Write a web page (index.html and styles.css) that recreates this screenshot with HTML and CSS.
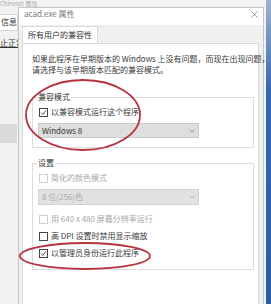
FILE: index.html
```html
<!DOCTYPE html>
<html lang="zh-CN">
<head>
  <meta charset="UTF-8">
  <title>acad.exe 属性</title>
  <link rel="stylesheet" href="styles.css">
</head>
<body>

<div class="desk">

  <!-- window behind -->
  <div class="win-back">
    <div class="back-title">Chinese) 属性</div>
    <div class="back-tab">信息</div>
    <div class="back-link">止正常</div>
    <div class="back-band"></div>
  </div>

  <!-- compat dialog -->
  <div class="dialog">
    <div class="titlebar">
      <span class="title">acad.exe 属性</span>
      <svg class="close" width="7" height="7" viewBox="0 0 7 7"><path d="M0.5 0.5L6.5 6.5M6.5 0.5L0.5 6.5" stroke="#888" stroke-width="0.9"/></svg>
    </div>
    <div class="tabs">
      <div class="tab">所有用户的兼容性</div>
    </div>
    <div class="panel">
      <p class="intro">如果此程序在早期版本的 Windows 上没有问题，而现在出现问题，<br>请选择与该早期版本匹配的兼容模式。</p>

      <div class="group g1">
        <div class="legend">兼容模式</div>
        <div class="check on"><span class="box"><svg width="7" height="7" viewBox="0 0 7 7"><path d="M1 3.6L2.8 5.4L6 1.4" fill="none" stroke="#333" stroke-width="0.9"/></svg></span>以兼容模式运行这个程序:</div>
        <div class="select">Windows 8<svg class="arrow" width="6" height="4" viewBox="0 0 6 4"><path d="M0.5 0.5L3 3L5.5 0.5" fill="none" stroke="#777" stroke-width="0.8"/></svg></div>
      </div>

      <div class="group g2">
        <div class="legend">设置</div>
        <div class="check off"><span class="box"></span>简化的颜色模式</div>
        <div class="select off">8 位(256)色<svg class="arrow" width="6" height="4" viewBox="0 0 6 4"><path d="M0.5 0.5L3 3L5.5 0.5" fill="none" stroke="#aaa" stroke-width="0.8"/></svg></div>
        <div class="check off row-640"><span class="box"></span>用 640 x 480 屏幕分辨率运行</div>
        <div class="check row-dpi"><span class="box"></span>高 DPI 设置时禁用显示缩放</div>
        <div class="check on row-admin"><span class="box"><svg width="7" height="7" viewBox="0 0 7 7"><path d="M1 3.6L2.8 5.4L6 1.4" fill="none" stroke="#333" stroke-width="0.9"/></svg></span>以管理员身份运行此程序</div>
      </div>
    </div>
  </div>

  <!-- hand drawn red marks -->
  <svg class="marks" width="271" height="304" viewBox="0 0 271 304">
    <ellipse cx="83" cy="115" rx="57" ry="35" fill="none" stroke="#b5343f" stroke-width="1.8"/>
    <ellipse cx="85" cy="256" rx="65" ry="13" fill="none" stroke="#b5343f" stroke-width="1.8"/>
  </svg>

</div>

</body>
</html>
```

FILE: styles.css
```css
body {
  margin: 0;
  font-family: "Noto Sans CJK SC", "Liberation Sans", sans-serif;
  font-size: 8px;
  color: #3a3a3a;
}
.desk {
  position: relative;
  width: 271px;
  height: 304px;
  overflow: hidden;
  background: linear-gradient(#9fb2cf, #3466b4 30%, #2d5ca8);
}

/* window behind */
.win-back {
  position: absolute;
  left: 0;
  top: 0;
  width: 266px;
  height: 304px;
  background: #f2f2f2;
}
.back-title {
  height: 7px;
  font-size: 6px;
  line-height: 7px;
  color: #aaa;
}
.back-tab {
  width: 16px;
  margin-top: 7px;
  padding: 2px 0 3px 1px;
  background: #fff;
  border: 1px solid #d6d6d6;
  border-left: none;
  line-height: 10px;
  color: #333;
}
.back-link {
  margin-top: 7px;
  line-height: 10px;
  color: #333;
  text-decoration: underline;
}
.back-band {
  width: 17px;
  height: 19px;
  margin-top: 76px;
  background: #dadada;
}

/* dialog */
.dialog {
  position: absolute;
  left: 18px;
  top: 7px;
  width: 244px;
  height: 310px;
  background: #f0f0f0;
  border: 1px solid #c4c4c4;
  border-bottom: none;
}
.titlebar {
  display: flex;
  align-items: center;
  justify-content: space-between;
  height: 12px;
  padding: 0 5px 5px 5px;
  background: #fff;
}
.title {
  color: #777;
  line-height: 10px;
}
.tabs {
  display: flex;
  padding: 1px 0 0 3px;
}
.tab {
  padding: 3px 5px 3px 5px;
  line-height: 10px;
  background: #fff;
  border: 1px solid #d9d9d9;
  border-bottom: none;
  color: #333;
}
.panel {
  margin: 0 4px 0 3px;
  height: 300px;
  padding: 9px 4px 0 9px;
  background: #fff;
  border: 1px solid #d9d9d9;
}
.intro {
  margin: 0;
  line-height: 11px;
  white-space: nowrap;
}

.group {
  border: 1px solid #dcdcdc;
  padding: 0 0 0 6px;
}
.g1 {
  margin-top: 22px;
  padding-bottom: 9px;
}
.g2 {
  margin-top: 15px;
  padding-bottom: 11px;
}
.legend {
  display: table;
  margin: -6px 0 0 -2px;
  padding: 0 1px;
  background: #fff;
  line-height: 10px;
  color: #333;
}
.check {
  display: flex;
  align-items: center;
  height: 10px;
  margin-top: 5px;
  line-height: 10px;
}
.box {
  display: flex;
  align-items: center;
  justify-content: center;
  width: 7px;
  height: 7px;
  margin-right: 3px;
  border: 1px solid #444;
  background: #fff;
}
.check.off {
  color: #a8a8a8;
}
.check.off .box {
  border-color: #cfcfcf;
}
.row-640 {
  margin-top: 9px;
}
.row-dpi {
  margin-top: 7px;
}
.row-admin {
  margin-top: 7px;
}
.select {
  display: flex;
  align-items: center;
  justify-content: space-between;
  width: 153px;
  height: 13px;
  margin: 6px 0 0 -1px;
  padding: 0 3px 0 3px;
  background: #dedede;
  border: 1px solid #c9c9c9;
  line-height: 10px;
  color: #333;
}
.select.off {
  height: 14px;
  color: #a8a8a8;
  background: #e2e2e2;
  border-color: #d2d2d2;
}

.marks {
  position: absolute;
  left: 0;
  top: 0;
}
```
